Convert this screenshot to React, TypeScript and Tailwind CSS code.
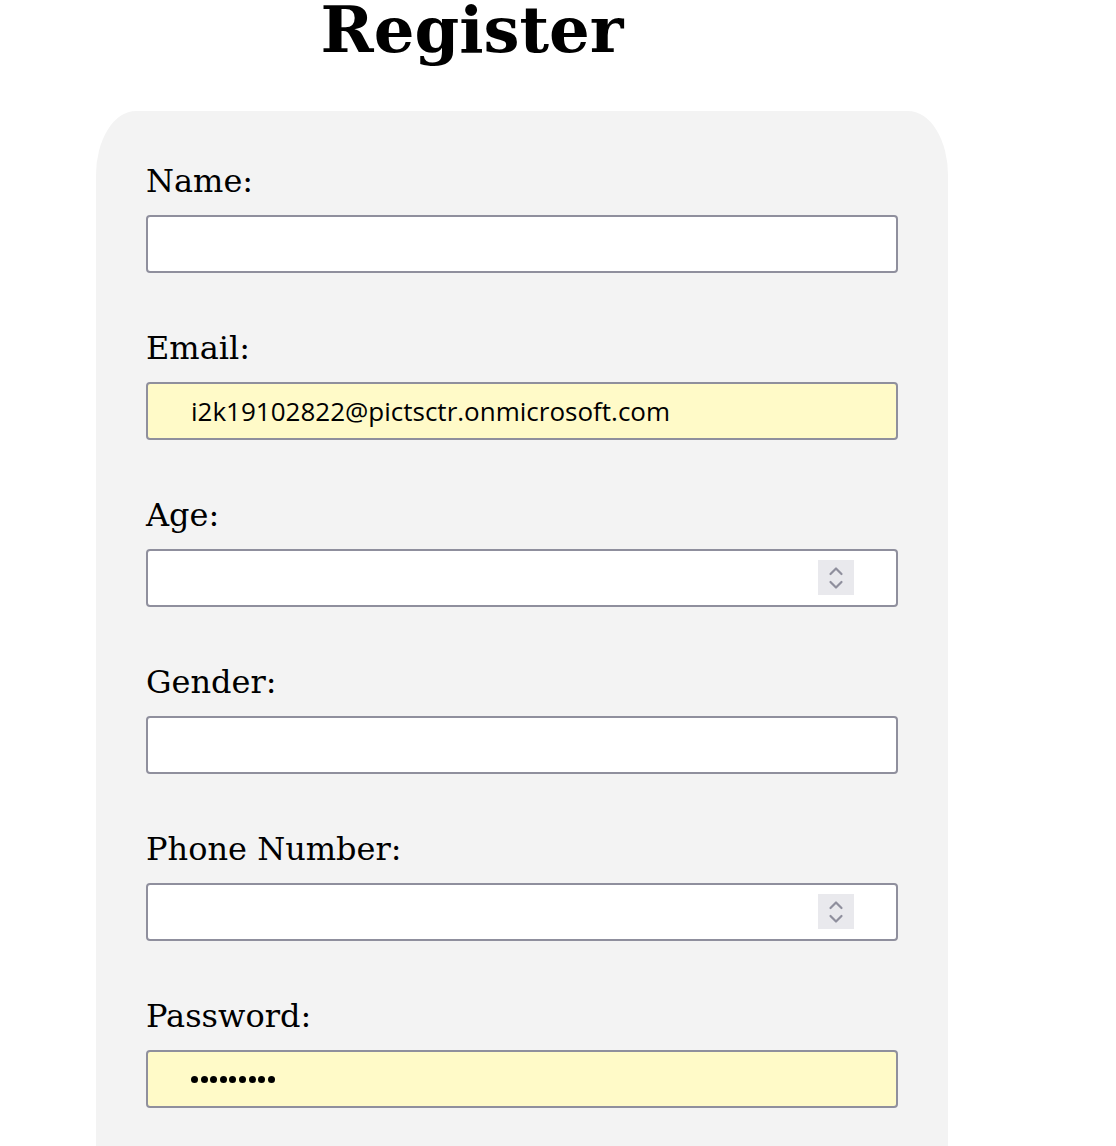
import { FC } from "react";

interface FieldProps {
  label: string;
  value?: string;
  autofill?: boolean;
  spinner?: boolean;
  password?: boolean;
}

const Spinner: FC = () => (
  <div className="absolute right-[42px] top-[9px] flex h-[35px] w-[36px] items-center justify-center bg-[#e9e9ed]">
    <svg width="16" height="28" viewBox="0 0 16 28" fill="none">
      <path d="M2.5 10 L8 4.5 L13.5 10" stroke="#8f8f9d" strokeWidth="2.2" strokeLinecap="round" strokeLinejoin="round" />
      <path d="M2.5 18 L8 23.5 L13.5 18" stroke="#8f8f9d" strokeWidth="2.2" strokeLinecap="round" strokeLinejoin="round" />
    </svg>
  </div>
);

const Field: FC<FieldProps> = ({ label, value = "", autofill, spinner, password }) => {
  return (
    <div className="flex flex-col">
      <label className="text-[32px] leading-[37px] text-black [font-family:'DejaVu_Serif',serif]">
        {label}
      </label>
      <div
        className={`relative mt-[15px] flex h-[58px] w-[752px] items-center rounded-[4px] border-2 border-[#8f8f9d] px-[43px] text-black ${
          autofill ? "bg-[#fffac8]" : "bg-white"
        }`}
      >
        {password ? (
          <span className="flex gap-[2.6px]">
            {Array.from({ length: 9 }).map((_, i) => (
              <span key={i} className="block h-[7px] w-[7px] rounded-full bg-black" />
            ))}
          </span>
        ) : (
          <span className="text-[26px] [font-family:'Open_Sans',sans-serif]">{value}</span>
        )}
        {spinner ? <Spinner /> : null}
      </div>
    </div>
  );
};

const App: FC = () => {
  return (
    <div className="h-[1146px] w-[1116px] overflow-hidden bg-white">
      <h1 className="-mt-[8px] w-[944px] text-center text-[64px] font-bold leading-[75px] text-black [font-family:'DejaVu_Serif',serif]">
        Register
      </h1>
      <div className="ml-[96px] mt-[44px] h-[1100px] w-[852px] rounded-tl-[40px_64px] rounded-tr-[40px_64px] bg-[#f3f3f3] px-[50px] pt-[52px]">
        <div className="flex flex-col gap-[57px]">
          <Field label="Name:" />
          <Field label="Email:" value="i2k19102822@pictsctr.onmicrosoft.com" autofill />
          <Field label="Age:" spinner />
          <Field label="Gender:" />
          <Field label="Phone Number:" spinner />
          <Field label="Password:" autofill password />
        </div>
      </div>
    </div>
  );
};

export default App;
